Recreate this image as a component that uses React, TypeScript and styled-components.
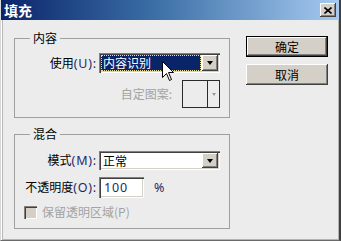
import React from "react";
import styled, { createGlobalStyle } from "styled-components";

const GlobalStyle = createGlobalStyle`
  html, body {
    margin: 0;
    padding: 0;
    background: #ececec;
  }
  body {
    font-family: "Noto Sans CJK SC", "Noto Sans", sans-serif;
    font-size: 12px;
    color: #000;
  }
  * {
    box-sizing: border-box;
  }
`;

const Window = styled.div`
  position: relative;
  width: 341px;
  height: 241px;
  overflow: hidden;
  background: #ececec;
  border-left: 1px solid #d8d8d8;
  border-right: 2px solid #404040;
  border-bottom: 1px solid #6a6a6a;
  box-shadow: inset 1px 0 #ffffff, inset 2px 0 #b8b8b8, inset -1px -1px #b4b4b4;
`;

const TitleBar = styled.div`
  display: flex;
  align-items: center;
  justify-content: space-between;
  height: 20px;
  margin-left: -1px;
  padding: 0 3px 0 4px;
  background: linear-gradient(to right, #0a246a 0%, #3a6ea5 45%, #a6caf0 100%);
`;

const Title = styled.span`
  color: #fff;
  font-weight: bold;
  font-size: 14px;
  line-height: 20px;
  letter-spacing: 0;
`;

const CloseButton = styled.div`
  display: flex;
  align-items: center;
  justify-content: center;
  width: 16px;
  height: 14px;
  background: #d4d0c8;
  box-shadow: inset -1px -1px #404040, inset 1px 1px #ffffff, inset -2px -2px #808080;
`;

const Body = styled.div`
  display: flex;
  padding: 11px 0 0 13px;
`;

const LeftColumn = styled.div`
  display: flex;
  flex-direction: column;
  width: 216px;
`;

const RightColumn = styled.div`
  display: flex;
  flex-direction: column;
  gap: 7px;
  margin: 5px 0 0 16px;
`;

const Group = styled.fieldset<{ $padTop: number; $gapTop?: number }>`
  margin: ${(p) => p.$gapTop ?? 0}px 0 0 0;
  padding: ${(p) => p.$padTop}px 9px 9px 9px;
  border: 1px solid #a0a0a0;
  min-width: 0;
  width: 216px;
`;

const GroupTitle = styled.legend`
  margin-left: 6px;
  padding: 0 3px;
  font-size: 12px;
  line-height: 14px;
`;

const FieldRow = styled.div<{ $gap?: number }>`
  display: flex;
  align-items: center;
  margin-top: ${(p) => p.$gap ?? 0}px;
`;

const FieldLabel = styled.label`
  width: 73px;
  margin-right: 2px;
  text-align: right;
  white-space: nowrap;
  line-height: 14px;
`;

const Key = styled.span`
  font-family: "Noto Sans", sans-serif;
  font-size: 12.5px;
  letter-spacing: 0.8px;
  color: #1e2a66;
`;

const PatternRow = styled.div`
  display: flex;
  align-items: center;
  justify-content: flex-end;
  margin-top: 7px;
`;

const DisabledLabel = styled.span`
  color: #a3a3a3;
  line-height: 14px;
  white-space: nowrap;
`;

const PatternBox = styled.div`
  display: flex;
  width: 38px;
  height: 28px;
  margin-left: 10px;
  border: 1px solid #2a2a2a;
`;

const PatternSwatch = styled.div`
  width: 25px;
  border-right: 1px solid #2a2a2a;
`;

const PatternArrow = styled.div`
  flex: 1;
  display: flex;
  align-items: center;
  justify-content: center;
  &::after {
    content: "";
    border-left: 2.5px solid transparent;
    border-right: 2.5px solid transparent;
    border-top: 3px solid #9a9a9a;
  }
`;

const Combo = styled.div<{ $h: number }>`
  display: flex;
  width: 121px;
  height: ${(p) => p.$h}px;
  padding: 2px;
  background: #fff;
  box-shadow: inset 1px 1px #808080, inset 2px 2px #404040, inset -1px -1px #ffffff,
    inset -2px -2px #d4d0c8;
`;

const ComboValue = styled.div<{ $focused?: boolean }>`
  flex: 1;
  display: flex;
  align-items: center;
  margin-right: 1px;
  padding-left: 2px;
  line-height: 14px;
  color: ${(p) => (p.$focused ? "#fff" : "#000")};
  background: ${(p) => (p.$focused ? "#0a246a" : "transparent")};
  outline: ${(p) => (p.$focused ? "1px dotted #e8dc9c" : "none")};
  outline-offset: -1px;
`;

const ComboButton = styled.div`
  display: flex;
  align-items: center;
  justify-content: center;
  width: 16px;
  background: #d4d0c8;
  box-shadow: inset -1px -1px #404040, inset 1px 1px #ffffff, inset -2px -2px #808080;
  &::after {
    content: "";
    border-left: 3.5px solid transparent;
    border-right: 3.5px solid transparent;
    border-top: 4px solid #000;
  }
`;

const TextInput = styled.div`
  display: flex;
  align-items: center;
  width: 45px;
  height: 21px;
  padding-left: 5px;
  background: #fff;
  box-shadow: inset 1px 1px #808080, inset 2px 2px #404040, inset -1px -1px #ffffff,
    inset -2px -2px #d4d0c8;
`;

const Percent = styled.span`
  margin-left: 10px;
  font-family: "Noto Sans", sans-serif;
  font-size: 12.5px;
  color: #1e2a66;
`;

const CheckRow = styled.div`
  display: flex;
  align-items: center;
  margin-top: 7px;
`;

const CheckBox = styled.div`
  width: 13px;
  height: 13px;
  margin-right: 5px;
  background: #d4d0c8;
  box-shadow: inset 1px 1px #808080, inset 2px 2px #404040, inset -1px -1px #ffffff,
    inset -2px -2px #d4d0c8;
`;

const Button = styled.div<{ $default?: boolean }>`
  display: flex;
  align-items: center;
  justify-content: center;
  width: 82px;
  height: 21px;
  background: #d4d0c8;
  font-size: 12px;
  line-height: 14px;
  border: ${(p) => (p.$default ? "1px solid #000" : "none")};
  box-shadow: ${(p) =>
    p.$default
      ? "inset -1px -1px #404040, inset 1px 1px #ffffff, inset -2px -2px #808080"
      : "inset -1px -1px #404040, inset 1px 1px #ffffff, inset -2px -2px #808080"};
`;

const Cursor = styled.svg`
  position: absolute;
  left: 161px;
  top: 61px;
`;

export default function App() {
  return (
    <>
      <GlobalStyle />
      <Window>
        <TitleBar>
          <Title>填充</Title>
          <CloseButton>
            <svg width="8" height="7" viewBox="0 0 8 7">
              <path d="M0.5 0.5 L7.5 6.5 M7.5 0.5 L0.5 6.5" stroke="#000" strokeWidth="1.6" />
            </svg>
          </CloseButton>
        </TitleBar>
        <Body>
          <LeftColumn>
            <Group $padTop={8}>
              <GroupTitle>内容</GroupTitle>
              <FieldRow>
                <FieldLabel>
                  使用<Key>(U):</Key>
                </FieldLabel>
                <Combo $h={20}>
                  <ComboValue $focused>内容识别</ComboValue>
                  <ComboButton />
                </Combo>
              </FieldRow>
              <PatternRow>
                <DisabledLabel>自定图案:</DisabledLabel>
                <PatternBox>
                  <PatternSwatch />
                  <PatternArrow />
                </PatternBox>
              </PatternRow>
            </Group>
            <Group $padTop={10} $gapTop={9}>
              <GroupTitle>混合</GroupTitle>
              <FieldRow>
                <FieldLabel>
                  模式<Key>(M):</Key>
                </FieldLabel>
                <Combo $h={19}>
                  <ComboValue>正常</ComboValue>
                  <ComboButton />
                </Combo>
              </FieldRow>
              <FieldRow $gap={7}>
                <FieldLabel>
                  不透明度<Key>(O):</Key>
                </FieldLabel>
                <TextInput>
                  <Key>100</Key>
                </TextInput>
                <Percent>%</Percent>
              </FieldRow>
              <CheckRow>
                <CheckBox />
                <DisabledLabel>保留透明区域(P)</DisabledLabel>
              </CheckRow>
            </Group>
          </LeftColumn>
          <RightColumn>
            <Button $default>确定</Button>
            <Button>取消</Button>
          </RightColumn>
        </Body>
        <Cursor width="13" height="21" viewBox="0 0 13 21">
          <path
            d="M0.5 0.5 L0.5 16.5 L4.5 12.5 L7.5 19.5 L9.5 18.5 L6.5 11.5 L11.5 11.5 Z"
            fill="#fff"
            stroke="#000"
            strokeWidth="1"
            strokeLinejoin="miter"
          />
        </Cursor>
      </Window>
    </>
  );
}
